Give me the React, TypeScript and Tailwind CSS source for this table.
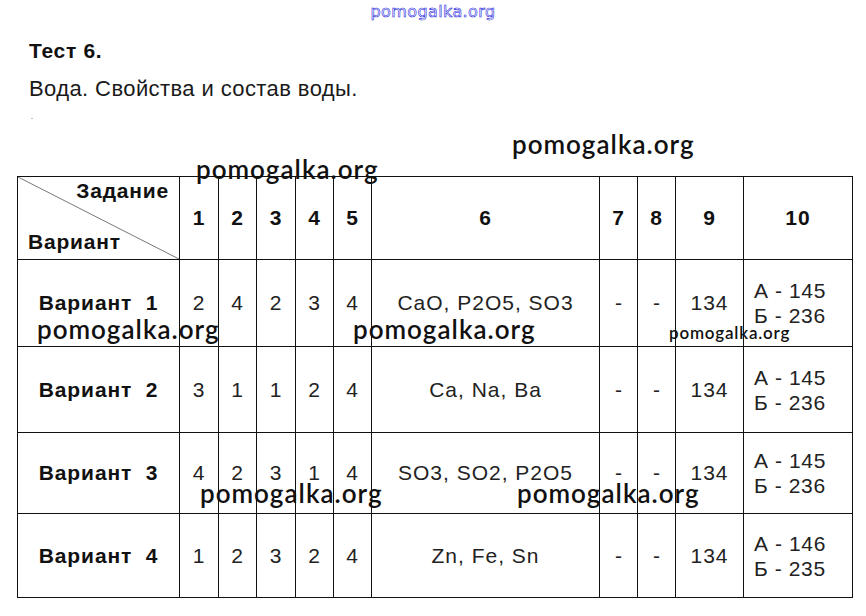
import React from "react";

const cols = "grid-cols-[162px_39px_38px_39px_38px_38px_228px_38px_38px_68px_109px]";

type Row = { name: string; d: string[]; six: string; a: string; b: string };
const rows: Row[] = [
  { name: "1", d: ["2", "4", "2", "3", "4"], six: "CaO, P2O5, SO3", a: "А - 145", b: "Б - 236" },
  { name: "2", d: ["3", "1", "1", "2", "4"], six: "Ca, Na, Ba", a: "А - 145", b: "Б - 236" },
  { name: "3", d: ["4", "2", "3", "1", "4"], six: "SO3, SO2, P2O5", a: "А - 145", b: "Б - 236" },
  { name: "4", d: ["1", "2", "3", "2", "4"], six: "Zn, Fe, Sn", a: "А - 146", b: "Б - 235" },
];
const heights = ["h-[87px]", "h-[86px]", "h-[81px]", "h-[84px]"];

const cell = "border-r border-b border-[#111] flex items-center justify-center";

function Wm({ x, y, small }: { x: string; y: string; small?: boolean }) {
  return (
    <div
      className={`absolute ${x} ${y} ${small ? "text-[17px] tracking-[0.8px]" : "text-[26px] tracking-[1px]"} font-semibold text-[#111] leading-none whitespace-nowrap pointer-events-none`}
      style={{ fontFamily: "Lato, 'Open Sans', sans-serif" }}
    >
      pomogalka.org
    </div>
  );
}

export default function App() {
  return (
    <div
      className="relative w-[866px] h-[616px] bg-white overflow-hidden text-[#222]"
      style={{ fontFamily: "'Liberation Sans', Arial, sans-serif" }}
    >
      <div
        className="text-center pt-[2px] text-[16px] leading-[20px] text-white [-webkit-text-stroke:0.6px_#2a2ae0] tracking-[0.4px]"
        style={{ fontFamily: "'DejaVu Sans', sans-serif" }}
      >
        pomogalka.org
      </div>
      <div className="pl-[29px] mt-[16px] text-[21px] leading-[26px] font-bold text-[#111] tracking-[0.7px]">Тест 6.</div>
      <div className="pl-[29px] mt-[12px] text-[22px] leading-[26px] text-[#1a1a1a] tracking-[0.4px]">
        Вода. Свойства и состав воды.
      </div>
      <div className="ml-[31px] mt-[16px] w-[2px] h-[1px] bg-[#bbb]" />

      <div className={`ml-[17px] mt-[57px] w-[836px] grid ${cols} border-l border-t border-[#111]`}>
        {/* header */}
        <div className="relative h-[83px] border-r border-b border-[#111]">
          <svg className="absolute inset-0" width="161" height="82" viewBox="0 0 161 82">
            <line x1="0" y1="0" x2="161" y2="82" stroke="#555" strokeWidth="0.8" />
          </svg>
          <div className="absolute right-[10px] top-[-2px] text-[21px] font-bold text-[#111] tracking-[0.8px]">Задание</div>
          <div className="absolute left-[10px] top-[49px] text-[21px] font-bold text-[#111] tracking-[0.8px]">Вариант</div>
        </div>
        {["1", "2", "3", "4", "5", "6", "7", "8", "9", "10"].map((h) => (
          <div key={h} className={`${cell} h-[83px] text-[21px] font-bold text-[#111] tracking-[1px]`}>
            {h}
          </div>
        ))}

        {rows.map((r, i) => (
          <React.Fragment key={r.name}>
            <div className={`${cell} ${heights[i]} text-[21px] font-bold text-[#111] tracking-[0.9px] whitespace-pre`}>
              {"Вариант  " + r.name}
            </div>
            {r.d.map((v, j) => (
              <div key={j} className={`${cell} ${heights[i]} text-[21px] tracking-[1px]`}>
                {v}
              </div>
            ))}
            <div className={`${cell} ${heights[i]} text-[21px] tracking-[1px]`}>{r.six}</div>
            <div className={`${cell} ${heights[i]} text-[21px]`}>-</div>
            <div className={`${cell} ${heights[i]} text-[21px]`}>-</div>
            <div className={`${cell} ${heights[i]} text-[21px] tracking-[1px]`}>134</div>
            <div className={`border-r border-b border-[#111] ${heights[i]} flex flex-col justify-center pl-[10px] text-[21px] leading-[25px] tracking-[0.6px]`}>
              <span>{r.a}</span>
              <span>{r.b}</span>
            </div>
          </React.Fragment>
        ))}
      </div>

      <Wm x="left-[512px]" y="top-[131px]" />
      <Wm x="left-[196px]" y="top-[156px]" />
      <Wm x="left-[37px]" y="top-[316px]" />
      <Wm x="left-[353px]" y="top-[316px]" />
      <Wm x="left-[669px]" y="top-[324px]" small />
      <Wm x="left-[200px]" y="top-[480px]" />
      <Wm x="left-[517px]" y="top-[480px]" />
    </div>
  );
}
